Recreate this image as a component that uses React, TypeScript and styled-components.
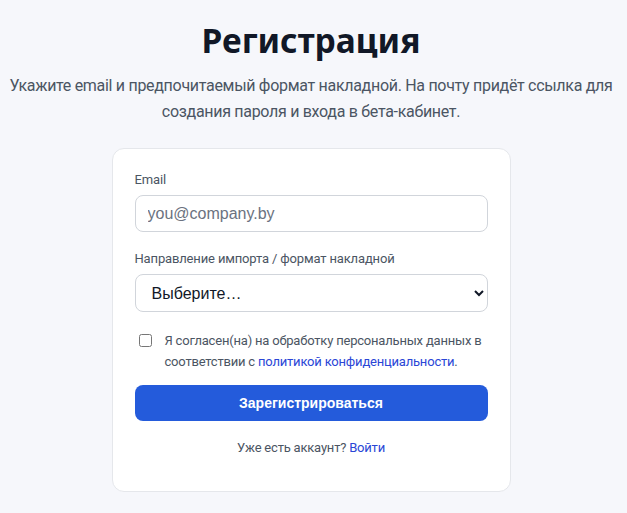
import React from "react";
import styled, { createGlobalStyle } from "styled-components";

const Global = createGlobalStyle`
  html, body { margin: 0; padding: 0; background: #f6f7fb; }
  body { font-family: Roboto, "Noto Sans", sans-serif; color: #1f2937; }
  * { box-sizing: border-box; }
`;

const Page = styled.main`
  display: flex;
  flex-direction: column;
  align-items: center;
  padding: 16px 11px 24px 6px;
`;

const Title = styled.h1`
  margin: 0;
  font-family: "Noto Sans", sans-serif;
  font-size: 33.5px;
  line-height: 48px;
  font-weight: 700;
  color: #111827;
  text-align: center;
`;

const Subtitle = styled.p`
  margin: 9px 0 23px;
  font-size: 16px;
  line-height: 26px;
  letter-spacing: -0.3px;
  color: #4b5563;
  text-align: center;
`;

const Card = styled.form`
  width: 399px;
  background: #fff;
  border: 1px solid #e5e7eb;
  border-radius: 12px;
  padding: 22px 22px 34px;
  display: flex;
  flex-direction: column;
`;

const Field = styled.div`
  display: flex;
  flex-direction: column;
  gap: 6px;
  margin-bottom: 18px;
`;

const Label = styled.label`
  font-size: 13px;
  line-height: 18px;
  letter-spacing: -0.15px;
  color: #4b5563;
`;

const Input = styled.input`
  height: 37px;
  border: 1px solid #d1d5db;
  border-radius: 8px;
  padding: 0 12px;
  font-family: "Liberation Sans", Arial, sans-serif;
  font-size: 16px;
  color: #111827;
  background: #fff;
  &::placeholder { color: #6b7280; }
`;

const Select = styled.select`
  height: 38px;
  border: 1px solid #d1d5db;
  border-radius: 8px;
  padding: 0 12px;
  font-family: "Liberation Sans", Arial, sans-serif;
  font-size: 16px;
  color: #111827;
  background: #fff;
`;

const Consent = styled.label`
  display: flex;
  align-items: flex-start;
  gap: 13px;
  padding-left: 4px;
  font-size: 13px;
  line-height: 21px;
  letter-spacing: -0.2px;
  color: #4b5563;
  margin-bottom: 13px;
`;

const Check = styled.input`
  width: 13px;
  height: 13px;
  margin: 4px 0 0;
  flex: none;
`;

const Link = styled.a`
  color: #2a46d6;
  text-decoration: none;
`;

const Button = styled.button`
  height: 36px;
  border: none;
  border-radius: 8px;
  background: #245bdb;
  color: #fff;
  font-family: "Liberation Sans", Arial, sans-serif;
  font-weight: 700;
  font-size: 14px;
  cursor: pointer;
`;

const Footer = styled.p`
  margin: 18px 0 0;
  font-size: 13px;
  line-height: 18px;
  letter-spacing: -0.2px;
  color: #4b5563;
  text-align: center;
`;

export default function App() {
  return (
    <>
      <Global />
      <Page>
        <Title>Регистрация</Title>
        <Subtitle>
          Укажите email и предпочитаемый формат накладной. На почту придёт ссылка для
          создания пароля и входа в бета-кабинет.
        </Subtitle>
        <Card onSubmit={(e) => e.preventDefault()}>
          <Field>
            <Label htmlFor="email">Email</Label>
            <Input id="email" type="email" placeholder="you@company.by" />
          </Field>
          <Field>
            <Label htmlFor="fmt">Направление импорта / формат накладной</Label>
            <Select id="fmt" defaultValue="">
              <option value="">Выберите…</option>
            </Select>
          </Field>
          <Consent>
            <Check type="checkbox" />
            <span>
              Я согласен(на) на обработку персональных данных в соответствии с{" "}
              <Link href="#">политикой конфиденциальности</Link>.
            </span>
          </Consent>
          <Button type="submit">Зарегистрироваться</Button>
          <Footer>
            Уже есть аккаунт? <Link href="#">Войти</Link>
          </Footer>
        </Card>
      </Page>
    </>
  );
}
